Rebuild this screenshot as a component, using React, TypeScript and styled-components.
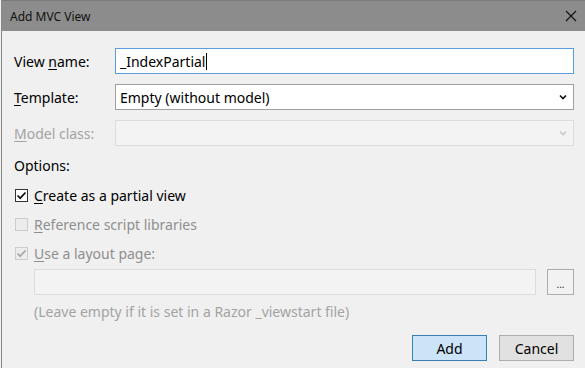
import React from 'react';
import styled, { createGlobalStyle } from 'styled-components';

const GlobalStyle = createGlobalStyle`
  html, body {
    margin: 0;
    padding: 0;
    background: #f0f0f0;
  }
  body {
    font-family: "Noto Sans", "Open Sans", sans-serif;
  }
`;

// Окно диалога
const Window = styled.div`
  width: 584px;
  height: 368px;
  margin-left: 1px;
  border-left: 1px solid #8a8a8a;
  box-sizing: border-box;
  background: #f0f0f0;
  display: flex;
  flex-direction: column;
  overflow: hidden;
`;

const TitleBar = styled.div`
  height: 31px;
  flex-shrink: 0;
  background: #8c8c8c;
  border-top: 1px solid #7a7a7a;
  box-sizing: border-box;
  display: flex;
  align-items: center;
  justify-content: space-between;
  padding: 0 8px 0 8px;
  font-size: 12px;
  color: #111;
`;

const CloseButton = styled.div`
  width: 12px;
  height: 12px;
  display: flex;
  color: #111;
`;

const Body = styled.div`
  flex: 1;
  padding: 17px 11px 0 12px;
  display: flex;
  flex-direction: column;
  font-size: 14px;
  color: #000;
`;

const FormGrid = styled.div`
  display: grid;
  grid-template-columns: 101px 1fr;
  row-gap: 10px;
  align-items: center;
`;

const Label = styled.label<{ $disabled?: boolean }>`
  color: ${p => (p.$disabled ? '#a3a3a3' : '#000')};
  white-space: nowrap;
`;

const Key = styled.span`
  text-decoration: underline;
  text-underline-offset: 2px;
`;

const TextBox = styled.div<{ $focused?: boolean; $disabled?: boolean }>`
  height: 26px;
  box-sizing: border-box;
  border: 1px solid ${p => (p.$focused ? '#5a9de0' : p.$disabled ? '#dcdcdc' : '#a0a0a0')};
  background: ${p => (p.$disabled ? '#f3f3f3' : '#fff')};
  display: flex;
  align-items: center;
  padding: 0 4px;
  white-space: nowrap;
`;

const Caret = styled.span`
  display: inline-block;
  width: 1px;
  height: 17px;
  background: #000;
  margin-left: 1px;
`;

const Combo = styled(TextBox)`
  justify-content: space-between;
  padding-right: 6px;
`;

const Chevron = ({ color }: { color: string }) => (
  <svg width="8" height="6" viewBox="0 0 8 6">
    <path d="M1 1.5 L4 4.5 L7 1.5" fill="none" stroke={color} strokeWidth="1.6" />
  </svg>
);

const SectionTitle = styled.div`
  margin-top: 10px;
  margin-bottom: 6px;
`;

const CheckRow = styled.div<{ $disabled?: boolean }>`
  display: flex;
  align-items: center;
  gap: 6px;
  height: 29px;
  padding-left: 1px;
  color: ${p => (p.$disabled ? '#8f8f8f' : '#000')};
`;

const Box = styled.div<{ $disabled?: boolean }>`
  width: 13px;
  height: 13px;
  box-sizing: border-box;
  border: 1px solid ${p => (p.$disabled ? '#cccccc' : '#333')};
  background: ${p => (p.$disabled ? '#ececec' : '#fff')};
  display: flex;
  align-items: center;
  justify-content: center;
`;

const Check = ({ color }: { color: string }) => (
  <svg width="11" height="11" viewBox="0 0 11 11">
    <path d="M1.5 5.5 L4.2 8.2 L9.5 2.5" fill="none" stroke={color} strokeWidth="1.7" />
  </svg>
);

const Indented = styled.div`
  padding-left: 20px;
  display: flex;
  flex-direction: column;
`;

const PathRow = styled.div`
  display: flex;
  gap: 11px;
  margin-top: 1px;
`;

const PathInput = styled(TextBox)`
  flex: 1;
`;

const BrowseButton = styled.div`
  width: 27px;
  height: 26px;
  box-sizing: border-box;
  border: 1px solid #adadad;
  background: #f2f2f2;
  font-size: 10px;
  color: #333;
  display: flex;
  align-items: flex-end;
  justify-content: center;
  padding-bottom: 5px;
  line-height: 1;
`;

const Hint = styled.div`
  color: #a3a3a3;
  margin-top: 7px;
`;

const Footer = styled.div`
  display: flex;
  justify-content: flex-end;
  gap: 12px;
  margin-top: 14px;
`;

const Button = styled.div<{ $primary?: boolean }>`
  width: 75px;
  height: 26px;
  box-sizing: border-box;
  border: 1px solid ${p => (p.$primary ? '#3c7fb1' : '#adadad')};
  background: ${p => (p.$primary ? '#cce4f7' : '#e1e1e1')};
  display: flex;
  align-items: center;
  justify-content: center;
`;

const App: React.FC = () => {
  return (
    <>
      <GlobalStyle />
      <Window>
        <TitleBar>
          <span>Add MVC View</span>
          <CloseButton>
            <svg width="12" height="12" viewBox="0 0 12 12">
              <path d="M1 1 L11 11 M11 1 L1 11" stroke="currentColor" strokeWidth="1.1" />
            </svg>
          </CloseButton>
        </TitleBar>
        <Body>
          <FormGrid>
            <Label>View <Key>n</Key>ame:</Label>
            <TextBox $focused>
              _IndexPartial<Caret />
            </TextBox>
            <Label><Key>T</Key>emplate:</Label>
            <Combo>
              <span>Empty (without model)</span>
              <Chevron color="#111" />
            </Combo>
            <Label $disabled><Key>M</Key>odel class:</Label>
            <Combo $disabled>
              <span />
              <Chevron color="#c8c8c8" />
            </Combo>
          </FormGrid>

          <SectionTitle>Options:</SectionTitle>
          <CheckRow>
            <Box><Check color="#111" /></Box>
            <span><Key>C</Key>reate as a partial view</span>
          </CheckRow>
          <CheckRow $disabled>
            <Box $disabled />
            <span><Key>R</Key>eference script libraries</span>
          </CheckRow>
          <CheckRow $disabled>
            <Box $disabled><Check color="#a8a8a8" /></Box>
            <span><Key>U</Key>se a layout page:</span>
          </CheckRow>

          <Indented>
            <PathRow>
              <PathInput $disabled />
              <BrowseButton>...</BrowseButton>
            </PathRow>
            <Hint>(Leave empty if it is set in a Razor _viewstart file)</Hint>
          </Indented>

          <Footer>
            <Button $primary>Add</Button>
            <Button>Cancel</Button>
          </Footer>
        </Body>
      </Window>
    </>
  );
};

export default App;
